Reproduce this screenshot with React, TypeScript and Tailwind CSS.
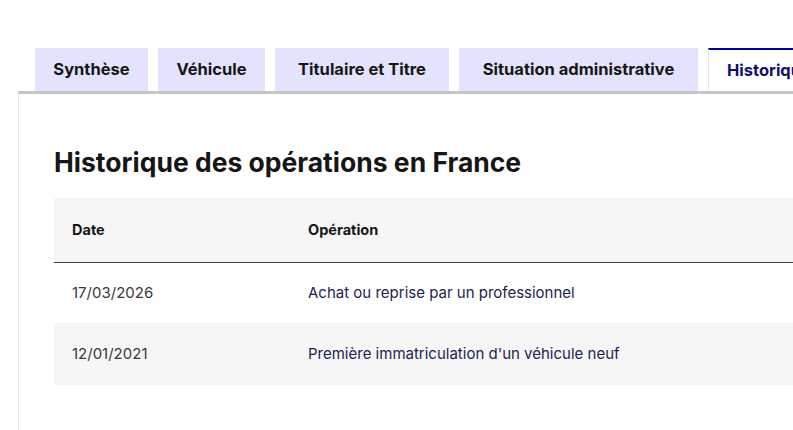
const tabs = [
  { label: "Synthèse", width: "w-[113px]" },
  { label: "Véhicule", width: "w-[107px]" },
  { label: "Titulaire et Titre", width: "w-[174px]" },
  { label: "Situation administrative", width: "w-[239px]" },
];

const operations = [
  { date: "17/03/2026", label: "Achat ou reprise par un professionnel" },
  { date: "12/01/2021", label: "Première immatriculation d'un véhicule neuf" },
];

const TabBar = () => (
  <div className="flex flex-row items-end gap-[10px] pl-[35px] whitespace-nowrap">
    {tabs.map((tab) => (
      <button
        key={tab.label}
        className={`${tab.width} h-[43px] shrink-0 bg-[#e3e3fd] text-[16.5px] font-bold text-[#161616] flex items-center justify-center`}
      >
        {tab.label}
      </button>
    ))}
    <button className="h-[43px] w-[140px] shrink-0 bg-white border-t-2 border-[#000091] border-l border-l-[#e5e5e5] text-[16.5px] font-bold text-[#10106e] flex items-center pl-[18px]">
      Historique
    </button>
  </div>
);

export default function App() {
  return (
    <div
      className="w-[793px] h-[430px] overflow-hidden bg-white pt-[48px]"
      style={{ fontFamily: "Inter, 'Noto Sans', sans-serif" }}
    >
      <TabBar />
      <div className="ml-[18px] w-[900px] border-t-[3px] border-[#c6c6c6] border-l border-l-[#e5e5e5] h-[400px]">
        <div className="pl-[35px] pt-[52px]">
          <h2 className="text-[26.5px] leading-[32px] font-bold text-[#161616]">
            Historique des opérations en France
          </h2>
          <table className="mt-[20px] w-[900px] border-collapse text-left">
            <thead>
              <tr className="bg-[#f6f6f6] border-b border-[#3a3a3a] h-[64px]">
                <th className="w-[236px] pl-[18px] text-[14.5px] font-bold text-[#161616]">Date</th>
                <th className="pl-[18px] text-[14.5px] font-bold text-[#161616]">Opération</th>
              </tr>
            </thead>
            <tbody>
              {operations.map((op, i) => (
                <tr key={op.date} className={i % 2 === 1 ? "h-[62px] bg-[#f6f6f6]" : "h-[61px] bg-white"}>
                  <td className="pl-[18px] text-[15px] text-[#3a3a3a]">{op.date}</td>
                  <td className="pl-[18px] text-[15px] text-[#1e1e4e]">{op.label}</td>
                </tr>
              ))}
            </tbody>
          </table>
        </div>
      </div>
    </div>
  );
}
